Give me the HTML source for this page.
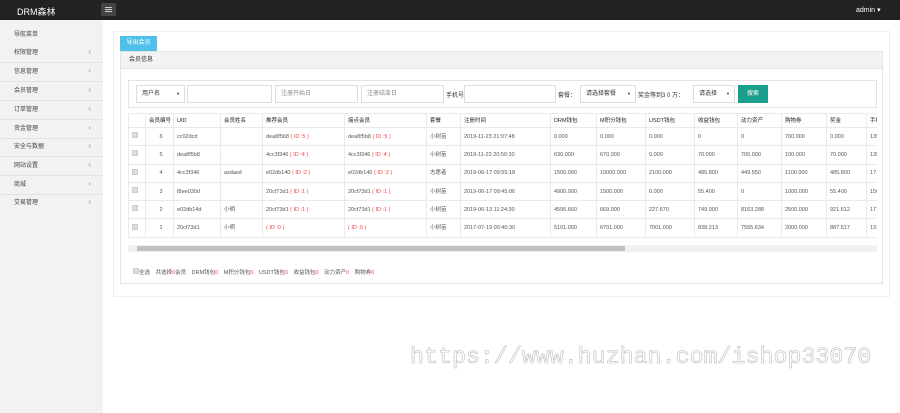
<!DOCTYPE html>
<html><head><meta charset="utf-8"><style>
*{margin:0;padding:0;box-sizing:border-box}
body{width:900px;height:413px;overflow:hidden;background:#fff;font-family:"Liberation Sans","Noto Sans CJK SC",sans-serif;font-size:6px;color:#333;position:relative}
.hdr{position:absolute;left:0;top:0;width:900px;height:20px;background:#222}
.logo{position:absolute;left:17px;top:5px;color:#fff;font-size:9px}
.tog{position:absolute;left:101px;top:3px;width:15px;height:13px;background:#444;border-radius:2px}
.tog i{position:absolute;left:4px;width:7px;height:1px;background:#ccc}
.adm{position:absolute;left:856px;top:6px;color:#fff;font-size:7px}
.side{position:absolute;left:0;top:20px;width:103px;height:393px;background:#f2f2f2}
.side div{position:absolute;left:0;width:103px;height:19px;border-bottom:1px solid #e2e2e2;padding-left:14px;line-height:19px;font-size:6px;color:#444}
.side div span{position:absolute;right:12px;top:-2px;color:#999;font-size:8px}
.outer{position:absolute;left:113px;top:31px;width:777px;height:266px;border:1px solid #eee}
.tab{position:absolute;left:120px;top:36px;width:37px;height:15px;background:#4ec0e9;color:#fff;line-height:15px;text-align:center;font-size:6px}
.panel{position:absolute;left:120px;top:51px;width:763px;height:233px;border:1px solid #e4e4e4}
.ph{height:17px;background:#f3f3f3;border-bottom:1px solid #e4e4e4;line-height:17px;padding-left:8px;font-size:6px}
.sb{position:absolute;left:128px;top:80px;width:749px;height:28px;border:1px solid #e4e4e4}
.in{position:absolute;top:85px;height:18px;border:1px solid #ddd;background:#fff;font-size:6px;color:#888;line-height:16px;padding-left:5px}
.lb{position:absolute;top:90px;font-size:6px;color:#333}
.btn{position:absolute;left:738px;top:85px;width:30px;height:18px;background:#1a9f8c;color:#fff;text-align:center;line-height:18px;font-size:6px}
table{position:absolute;border-collapse:collapse;font-size:5.5px;table-layout:fixed;width:760px}
td{border:1px solid #eaeaea;height:18.3px;padding:0 0 0 3px;line-height:8px;white-space:nowrap;overflow:hidden;color:#555;vertical-align:middle}
tr:first-child td{height:14px;color:#222}
.r{color:#e44}
.cb{display:inline-block;width:6px;height:6px;background:#ddd;border:1px solid #ccc}
.clip{position:absolute;left:128px;top:113px;width:749px;height:125px;overflow:hidden}
.scr{position:absolute;left:128px;top:245px;width:749px;height:7px;background:#f1f1f1}
.thumb{position:absolute;left:137px;top:246px;width:488px;height:5px;background:#c1c1c1}
.ft{position:absolute;left:133px;top:268px;font-size:5.5px;color:#555;word-spacing:4px}
.wm{position:absolute;left:410px;top:344px;font-family:"Liberation Mono",monospace;font-size:23.3px;color:#fff;-webkit-text-stroke:0.6px #bbb;white-space:nowrap}
</style></head><body>
<div class="hdr"><div class="logo">DRM森林</div><div class="tog"><i style="top:4px"></i><i style="top:6px"></i><i style="top:8px"></i></div><div class="adm">admin ▾</div></div>
<div class="side">
<div style="top:6px;border:none">导航菜单</div>
<div style="top:24px">权限管理<span>‹</span></div>
<div style="top:43px">信息管理<span>‹</span></div>
<div style="top:62px">会员管理<span>‹</span></div>
<div style="top:81px">订单管理<span>‹</span></div>
<div style="top:100px">资金管理<span>‹</span></div>
<div style="top:118px">安全与数据<span>‹</span></div>
<div style="top:137px">网站设置<span>‹</span></div>
<div style="top:156px">商城<span>‹</span></div>
<div style="top:174px;border:none">交易管理<span>‹</span></div>
</div>
<div class="outer"></div>
<div class="tab">导出会员</div>
<div class="panel"><div class="ph">会员信息</div></div>
<div class="sb"></div>
<div class="in" style="left:136px;width:49px;color:#333">用户名 <span style="float:right;margin-right:4px;font-size:4px">▼</span></div>
<div class="in" style="left:187px;width:85px"></div>
<div class="in" style="left:275px;width:83px">注册开始日</div>
<div class="in" style="left:361px;width:83px">注册结束日</div>
<div class="lb" style="left:446px">手机号</div>
<div class="in" style="left:464px;width:92px"></div>
<div class="lb" style="left:558px">套餐：</div>
<div class="in" style="left:580px;width:56px;color:#333">请选择套餐 <span style="float:right;margin-right:4px;font-size:4px">▼</span></div>
<div class="lb" style="left:638px">奖金等到3 0 万：</div>
<div class="in" style="left:693px;width:42px;color:#333">请选择 <span style="float:right;margin-right:4px;font-size:4px">▼</span></div>
<div class="btn">搜索</div>
<div class="clip"><table style="left:0;top:0">
<colgroup><col style="width:17px"><col style="width:28px"><col style="width:47px"><col style="width:42px"><col style="width:82px"><col style="width:82px"><col style="width:34px"><col style="width:90px"><col style="width:46px"><col style="width:49px"><col style="width:49px"><col style="width:43px"><col style="width:44px"><col style="width:45px"><col style="width:40px"><col style="width:22px"></colgroup>
<tr><td></td><td>会员编号</td><td>UID</td><td>会员姓名</td><td>推荐会员</td><td>接点会员</td><td>套餐</td><td>注册时间</td><td>DRM钱包</td><td>M积分钱包</td><td>USDT钱包</td><td>收益钱包</td><td>动力资产</td><td>购物券</td><td>奖金</td><td>手机</td></tr>
<tr><td><span class="cb"></span></td><td style="text-align:center">6</td><td>cc02dcd</td><td></td><td>dea8f5b8 <span class="r">( ID :5 )</span></td><td>dea8f5b8 <span class="r">( ID :5 )</span></td><td>小树苗</td><td>2019-11-23 21:07:48</td><td>0.000</td><td>0.000</td><td>0.000</td><td>0</td><td>0</td><td>700.000</td><td>0.000</td><td>135</td></tr>
<tr><td><span class="cb"></span></td><td style="text-align:center">5</td><td>dea8f5b8</td><td></td><td>4cc3f346 <span class="r">( ID :4 )</span></td><td>4cc3f346 <span class="r">( ID :4 )</span></td><td>小树苗</td><td>2019-11-23 20:50:30</td><td>630.000</td><td>670.000</td><td>0.000</td><td>70.000</td><td>700.000</td><td>100.000</td><td>70.000</td><td>135</td></tr>
<tr><td><span class="cb"></span></td><td style="text-align:center">4</td><td>4cc3f346</td><td>asdasd</td><td>e02db140 <span class="r">( ID :2 )</span></td><td>e02db140 <span class="r">( ID :2 )</span></td><td>志愿者</td><td>2019-06-17 09:55:18</td><td>1500.000</td><td>10000.000</td><td>2100.000</td><td>485.800</td><td>449.550</td><td>1100.000</td><td>485.800</td><td>171</td></tr>
<tr><td><span class="cb"></span></td><td style="text-align:center">3</td><td>f8ee030d</td><td></td><td>20cf73d1 <span class="r">( ID :1 )</span></td><td>20cf73d1 <span class="r">( ID :1 )</span></td><td>小树苗</td><td>2019-06-17 09:45:06</td><td>4900.000</td><td>1500.000</td><td>0.000</td><td>55.400</td><td>0</td><td>1000.000</td><td>55.400</td><td>150</td></tr>
<tr><td><span class="cb"></span></td><td style="text-align:center">2</td><td>e02db14d</td><td>小明</td><td>20cf73d1 <span class="r">( ID :1 )</span></td><td>20cf73d1 <span class="r">( ID :1 )</span></td><td>小树苗</td><td>2019-06-13 11:24:30</td><td>4596.660</td><td>669.000</td><td>227.670</td><td>749.900</td><td>8163.288</td><td>2500.000</td><td>921.612</td><td>171</td></tr>
<tr><td><span class="cb"></span></td><td style="text-align:center">1</td><td>20cf73d1</td><td>小明</td><td><span class="r">( ID :0 )</span></td><td><span class="r">( ID :0 )</span></td><td>小树苗</td><td>2017-07-19 00:40:30</td><td>5101.000</td><td>6701.000</td><td>7001.000</td><td>838.213</td><td>7555.634</td><td>2000.000</td><td>887.517</td><td>131</td></tr>
</table></div>
<div class="scr"></div><div class="thumb"></div>
<div class="ft"><span class="cb"></span>全选 共选择<span class="r">0</span>会员 DRM钱包<span class="r">0</span> M积分钱包<span class="r">0</span> USDT钱包<span class="r">0</span> 收益钱包<span class="r">0</span> 动力资产<span class="r">0</span> 购物券<span class="r">0</span></div>
<div class="wm">https://www.huzhan.com/ishop33070</div>
</body></html>
